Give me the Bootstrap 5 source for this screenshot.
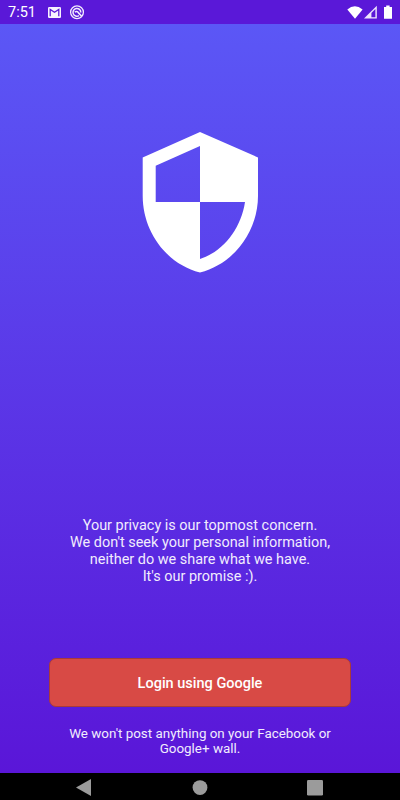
<!DOCTYPE html>
<html lang="en">
<head>
<meta charset="utf-8">
<meta name="viewport" content="width=device-width, initial-scale=1">
<title>Login</title>
<link href="https://cdn.jsdelivr.net/npm/bootstrap@5.3.0/dist/css/bootstrap.min.css" rel="stylesheet">
<style>
body{font-family:Roboto,"Liberation Sans",sans-serif;background:#5a18d8}
.screen{height:800px;width:400px;overflow:hidden}
.status-bar{height:24px;background:#5a18d8;font-size:14.5px;line-height:24px;padding:1px 7px 0 8px}
.clock{width:40px}
.welcome{background:linear-gradient(#5b57f6,#5a16d8);padding:108px 0 0}
.shield{margin-bottom:244px}
.promise{font-size:14.45px;line-height:17px;margin-bottom:73px;color:#f1ecfd}
.btn-google{width:302px;height:49px;font-size:14.5px;font-weight:500;border-radius:7px;--bs-btn-bg:#d84a45;--bs-btn-border-color:#a83a3a;--bs-btn-color:#fff;--bs-btn-hover-bg:#c9403b;--bs-btn-hover-color:#fff}
.btn-google span{display:block;padding-top:2px}
.note{font-size:13.4px;line-height:15px;margin-top:19px;color:#f1ecfd}
.nav-keys{height:27px;background:#000}
</style>
<script src="https://cdn.jsdelivr.net/npm/bootstrap@5.3.0/dist/js/bootstrap.bundle.min.js"></script>
</head>
<body>
<div class="screen d-flex flex-column">
  <header class="status-bar d-flex align-items-center text-white flex-shrink-0">
    <span class="clock">7:51</span>
    <svg width="13" height="12" viewBox="0 0 13 12"><rect x="0" y="0" width="13" height="11" rx="1.200" fill="#f7f3fe"/><path d="M2.200 9.300V2.500L6.500 5.200l4.300-2.700v6.800" fill="none" stroke="#5a18d8" stroke-width="1.250"/></svg>
    <svg class="ms-2" width="16" height="15" viewBox="-.5 .3 16 15" fill="none" stroke="#f3edfd"><circle cx="7.500" cy="7.500" r="6.400" stroke-width="1.300"/><path d="M9.500 10.900A3.900 3.900 0 1 1 11.300 7.800" stroke-width="1.500"/><path d="M5.300 7.500Q7.500 5.800 9 8.200L12.200 11.500" stroke-width="1.600"/></svg>
    <svg class="ms-auto" width="46" height="15" viewBox="0 0 46 15" fill="#fff"><path d="M.3 4.400Q7.800 -1.800 15.600 4.400L8 13.700Z"/><path d="M29.800.8V13.600H17Z" fill="#eee6fc"/><path d="M24.400 8l4-4v8.200h-4Z" fill="#5a18d8"/><path d="M37 1.900h2.200V.6h3.400v1.300H45v11.800h-8Z"/></svg>
  </header>
  <main class="welcome flex-grow-1 d-flex flex-column align-items-center text-center">
    <svg class="shield flex-shrink-0" width="116" height="141" viewBox="142 132 116 141"><path fill="#fff" fill-rule="evenodd" d="M200 132L258 157.500V196C258 231 234 264 200 272.500C166 264 142.700 231 142.700 196V157.500ZM200 146L155.700 165.700V202H200ZM200 202V259C223.500 251.500 241 228.500 245 202Z"/></svg>
    <p class="promise">Your privacy is our topmost concern.<br>We don't seek your personal information,<br>neither do we share what we have.<br>It's our promise :).</p>
    <button class="btn btn-google p-0 flex-shrink-0" type="button"><span>Login using Google</span></button>
    <p class="note mb-0">We won't post anything on your Facebook or<br>Google+ wall.</p>
  </main>
  <nav class="nav-keys flex-shrink-0">
    <svg class="d-block" width="400" height="27" viewBox="0 0 400 27" fill="#9b9b9b"><path d="M76 14.500L91 6v17Z"/><circle cx="200" cy="14.600" r="7.400"/><rect x="307" y="7" width="16" height="15.500" rx="1.300"/></svg>
  </nav>
</div>
</body>
</html>
